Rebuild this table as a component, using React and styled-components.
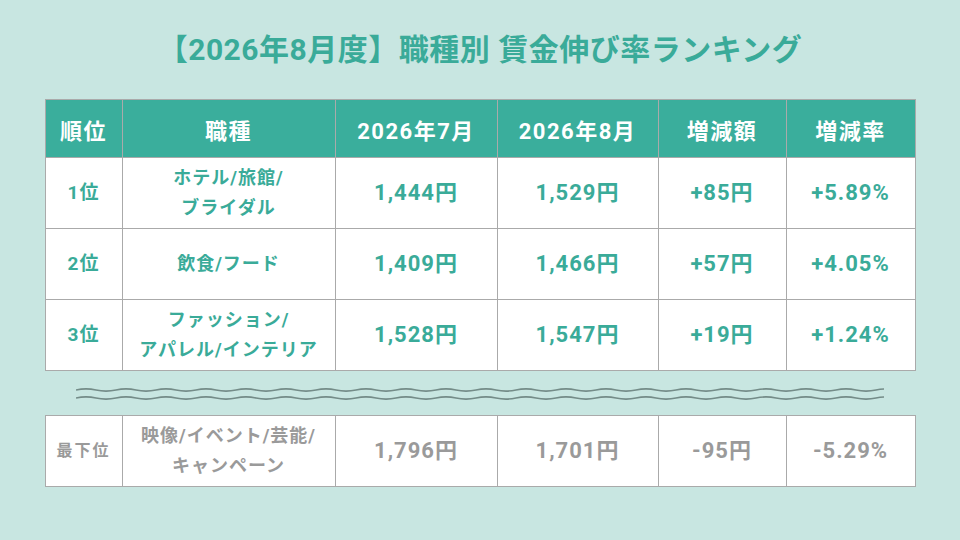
import React from "react";
import styled, { createGlobalStyle } from "styled-components";

const GlobalStyle = createGlobalStyle`
  html, body {
    margin: 0;
    padding: 0;
  }
  body {
    font-family: Roboto, "Noto Sans CJK JP", "Noto Sans", sans-serif;
  }
`;

const TEAL = "#3aab99";
const GRAY = "#9a9a9a";
const LINE = "#aaaaaa";

const widths = [77, 213, 162, 161, 128, 129];

const rows = [
  { rank: "1位", job: ["ホテル/旅館/", "ブライダル"], jul: "1,444円", aug: "1,529円", diff: "+85円", rate: "+5.89%" },
  { rank: "2位", job: ["飲食/フード"], jul: "1,409円", aug: "1,466円", diff: "+57円", rate: "+4.05%" },
  { rank: "3位", job: ["ファッション/", "アパレル/インテリア"], jul: "1,528円", aug: "1,547円", diff: "+19円", rate: "+1.24%" },
];

const last = {
  rank: "最下位",
  job: ["映像/イベント/芸能/", "キャンペーン"],
  jul: "1,796円",
  aug: "1,701円",
  diff: "-95円",
  rate: "-5.29%",
};

const Page = styled.div`
  width: 960px;
  height: 540px;
  background: #c8e6e1;
  box-sizing: border-box;
  padding-top: 30px;
  display: flex;
  flex-direction: column;
  align-items: center;
`;

const Title = styled.h1`
  margin: 0 0 29px;
  height: 40px;
  line-height: 40px;
  font-size: 30px;
  font-weight: 700;
  color: ${TEAL};
  letter-spacing: 0.5px;
`;

const Table = styled.table`
  border-collapse: collapse;
  table-layout: fixed;
  width: 870px;
  background: #fff;
`;

const HeadCell = styled.th`
  height: 57px;
  padding: 0;
  background: #3aae9c;
  color: #fff;
  font-size: 22px;
  font-weight: 700;
  letter-spacing: 1.5px;
  border: 1px solid ${LINE};
  text-align: center;
`;

const Cell = styled.td`
  height: 70px;
  padding: 0;
  border: 1px solid ${LINE};
  text-align: center;
  color: ${(p) => (p.$muted ? GRAY : TEAL)};
  font-weight: 700;
  font-size: ${(p) => (p.$size ? p.$size : 22)}px;
  letter-spacing: ${(p) => (p.$spacing !== undefined ? p.$spacing : 1)}px;
  line-height: 30px;
`;

const JobLine = styled.div`
  white-space: nowrap;
`;

const WaveBox = styled.div`
  width: 870px;
  height: 44px;
  display: flex;
  align-items: center;
  justify-content: center;
`;

const wavePath = (y, len) => {
  let d = `M0 ${y}`;
  for (let x = 0; x < len; x += 40) {
    d += ` q10 -2.2 20 0 q10 2.2 20 0`;
  }
  return d;
};

const Wave = () => (
  <svg width="808" height="16" viewBox="0 0 808 16">
    <path d={wavePath(5, 808)} fill="none" stroke="#748c88" strokeWidth="1.6" />
    <path d={wavePath(13, 808)} fill="none" stroke="#748c88" strokeWidth="1.6" />
  </svg>
);

const Cols = () => (
  <colgroup>
    {widths.map((w, i) => (
      <col key={i} style={{ width: w }} />
    ))}
  </colgroup>
);

const DataRow = ({ row, muted }) => (
  <tr>
    <Cell $muted={muted} $size={muted ? 16 : 19} $spacing={muted ? 2 : 1}>
      {row.rank}
    </Cell>
    <Cell $muted={muted} $size={18} $spacing={1}>
      {row.job.map((l) => (
        <JobLine key={l}>{l}</JobLine>
      ))}
    </Cell>
    <Cell $muted={muted}>{row.jul}</Cell>
    <Cell $muted={muted}>{row.aug}</Cell>
    <Cell $muted={muted}>{row.diff}</Cell>
    <Cell $muted={muted}>{row.rate}</Cell>
  </tr>
);

const App = () => (
  <>
    <GlobalStyle />
    <Page>
      <Title>【2026年8月度】職種別 賃金伸び率ランキング</Title>
      <Table>
        <Cols />
        <thead>
          <tr>
            <HeadCell>順位</HeadCell>
            <HeadCell>職種</HeadCell>
            <HeadCell>2026年7月</HeadCell>
            <HeadCell>2026年8月</HeadCell>
            <HeadCell>増減額</HeadCell>
            <HeadCell>増減率</HeadCell>
          </tr>
        </thead>
        <tbody>
          {rows.map((r) => (
            <DataRow key={r.rank} row={r} />
          ))}
        </tbody>
      </Table>
      <WaveBox>
        <Wave />
      </WaveBox>
      <Table>
        <Cols />
        <tbody>
          <DataRow row={last} muted />
        </tbody>
      </Table>
    </Page>
  </>
);

export default App;
